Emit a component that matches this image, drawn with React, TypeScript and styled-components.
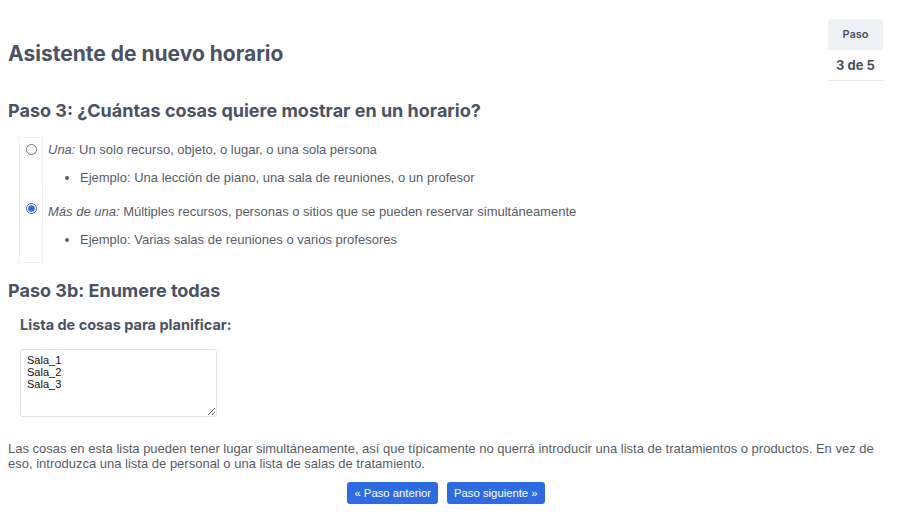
import styled, { createGlobalStyle } from "styled-components";

const GlobalStyle = createGlobalStyle`
  html, body {
    margin: 0;
    padding: 0;
    background: #ffffff;
  }
  body {
    font-family: "Liberation Sans", Arial, sans-serif;
    font-size: 13px;
    color: #575d68;
  }
`;

interface IOption {
  id: string;
  title: string;
  text: string;
  example: string;
  checked: boolean;
}

const options: IOption[] = [
  {
    id: "one",
    title: "Una:",
    text: "Un solo recurso, objeto, o lugar, o una sola persona",
    example: "Ejemplo: Una lección de piano, una sala de reuniones, o un profesor",
    checked: false,
  },
  {
    id: "many",
    title: "Más de una:",
    text: "Múltiples recursos, personas o sitios que se pueden reservar simultáneamente",
    example: "Ejemplo: Varias salas de reuniones o varios profesores",
    checked: true,
  },
];

export default function App() {
  return (
    <Page>
      <GlobalStyle />
      <Header>
        <Title>Asistente de nuevo horario</Title>
        <StepTable>
          <StepHead>Paso</StepHead>
          <StepValue>3 de 5</StepValue>
        </StepTable>
      </Header>

      <StepTitle space={18}>Paso 3: ¿Cuántas cosas quiere mostrar en un horario?</StepTitle>

      <OptionGrid>
        {options.map((o, i) => (
          <OptionRow key={o.id}>
            <RadioCell first={i === 0} last={i === options.length - 1}>
              <Radio type="radio" name="count" defaultChecked={o.checked} />
            </RadioCell>
            <OptionBody last={i === options.length - 1}>
              <OptionLabel>
                <em>{o.title}</em> {o.text}
              </OptionLabel>
              <Examples>
                <li>{o.example}</li>
              </Examples>
            </OptionBody>
          </OptionRow>
        ))}
      </OptionGrid>

      <StepTitle space={16}>Paso 3b: Enumere todas</StepTitle>

      <ListSection>
        <ListTitle>Lista de cosas para planificar:</ListTitle>
        <ListInput defaultValue={"Sala_1\nSala_2\nSala_3"} />
      </ListSection>

      <Note>
        Las cosas en esta lista pueden tener lugar simultáneamente, así que típicamente no querrá
        introducir una lista de tratamientos o productos. En vez de eso, introduzca una lista de
        personal o una lista de salas de tratamiento.
      </Note>

      <Nav>
        <NavButton>« Paso anterior</NavButton>
        <NavButton>Paso siguiente »</NavButton>
      </Nav>
    </Page>
  );
}

const Page = styled.div`
  padding: 0 8px;
`;

const Header = styled.div`
  display: flex;
  align-items: flex-start;
  justify-content: space-between;
  padding-top: 19px;
  padding-right: 9px;
`;

const Title = styled.h1`
  margin: 22px 0 0;
  font-family: Inter, "Liberation Sans", sans-serif;
  font-size: 21px;
  font-weight: 700;
  line-height: 26px;
  color: #4a5263;
`;

const StepTable = styled.div`
  display: flex;
  flex-direction: column;
  width: 55px;
  font-family: Inter, "Liberation Sans", sans-serif;
  text-align: center;
  color: #4a5263;
`;

const StepHead = styled.div`
  height: 31px;
  line-height: 31px;
  background: #eef2f7;
  border-radius: 4px 4px 0 0;
  font-size: 11px;
  font-weight: 600;
`;

const StepValue = styled.div`
  height: 30px;
  line-height: 30px;
  border-bottom: 1px solid #e6e9ee;
  font-size: 13px;
  font-weight: 700;
`;

const StepTitle = styled.h2<{ space: number }>`
  margin: ${(p) => p.space}px 0 0;
  font-family: Inter, "Liberation Sans", sans-serif;
  font-size: 18px;
  font-weight: 700;
  line-height: 24px;
  color: #4a5263;
`;

const OptionGrid = styled.div`
  display: flex;
  flex-direction: column;
  margin: 14px 0 0 11px;
`;

const OptionRow = styled.div`
  display: flex;
`;

const RadioCell = styled.div<{ first?: boolean; last?: boolean }>`
  width: 22px;
  flex: 0 0 22px;
  display: flex;
  justify-content: center;
  padding-top: ${(p) => (p.first ? 2 : 0)}px;
  border-left: 1px solid #eceef1;
  border-right: 1px solid #eceef1;
  border-top: ${(p) => (p.first ? "1px solid #eceef1" : "none")};
  border-bottom: ${(p) => (p.last ? "1px solid #eceef1" : "none")};
`;

const Radio = styled.input`
  margin: 4px 0 0;
  width: 11px;
  height: 11px;
  accent-color: #2f6fe0;
`;

const OptionBody = styled.div<{ last?: boolean }>`
  padding: ${(p) => (p.last ? "3px 0 13px 5px" : "3px 0 11px 5px")};
`;

const OptionLabel = styled.div`
  line-height: 20px;
`;

const Examples = styled.ul`
  margin: 8px 0 0;
  padding-left: 32px;
  line-height: 20px;
`;

const ListSection = styled.div`
  padding-left: 12px;
`;

const ListTitle = styled.h3`
  margin: 12px 0 14px;
  font-family: Inter, "Liberation Sans", sans-serif;
  font-size: 14.5px;
  font-weight: 700;
  line-height: 20px;
  color: #4a5263;
`;

const ListInput = styled.textarea`
  display: block;
  box-sizing: border-box;
  width: 197px;
  height: 68px;
  padding: 4px 6px;
  border: 1px solid #e2e4e8;
  border-radius: 3px;
  font-family: "Liberation Sans", Arial, sans-serif;
  font-size: 11px;
  line-height: 12px;
  color: #111;
  outline: none;
`;

const Note = styled.p`
  margin: 24px 0 0;
  line-height: 15px;
`;

const Nav = styled.div`
  display: flex;
  justify-content: center;
  gap: 9px;
  margin-top: 11px;
  padding-right: 8px;
`;

const NavButton = styled.button`
  height: 22px;
  padding: 0 7px;
  border: none;
  border-radius: 3px;
  background: #2f6be0;
  color: #ffffff;
  font-family: "Liberation Sans", Arial, sans-serif;
  font-size: 11.3px;
  cursor: pointer;
`;
